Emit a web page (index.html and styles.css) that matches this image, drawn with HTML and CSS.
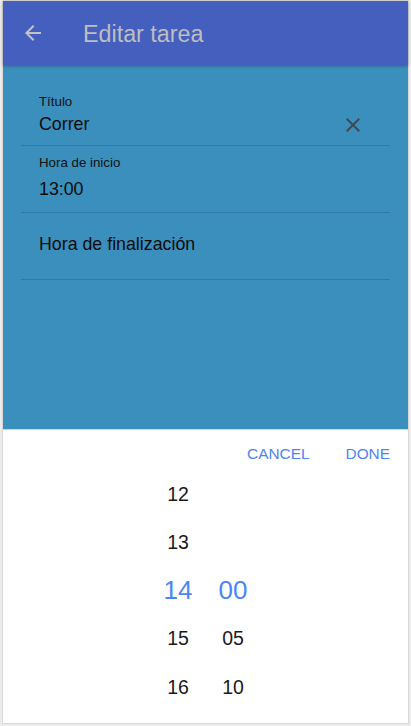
FILE: index.html
```html
<!DOCTYPE html>
<html lang="es">
<head>
<meta charset="utf-8">
<title>Editar tarea</title>
<link rel="stylesheet" href="styles.css">
</head>
<body>
<div class="app">
  <header class="toolbar">
    <svg class="back" viewBox="0 0 24 24" width="24" height="24"><path d="M20 11H7.83l5.59-5.59L12 4l-8 8 8 8 1.41-1.41L7.83 13H20v-2z"/></svg>
    <h1 class="title">Editar tarea</h1>
  </header>
  <main class="form">
    <div class="field field-title">
      <div class="field-body">
        <div class="label">Título</div>
        <div class="value">Correr</div>
      </div>
      <svg class="clear" viewBox="0 0 24 24" width="24" height="24"><path d="M19 6.41L17.59 5 12 10.59 6.41 5 5 6.41 10.59 12 5 17.59 6.41 19 12 13.41 17.59 19 19 17.59 13.41 12z"/></svg>
    </div>
    <div class="field field-start">
      <div class="field-body">
        <div class="label">Hora de inicio</div>
        <div class="value">13:00</div>
      </div>
    </div>
    <div class="field field-end">
      <div class="field-body">
        <div class="value">Hora de finalización</div>
      </div>
    </div>
  </main>
  <section class="picker">
    <div class="picker-actions">
      <span class="btn">CANCEL</span>
      <span class="btn">DONE</span>
    </div>
    <div class="wheels">
      <div class="wheel">
        <div class="item">12</div>
        <div class="item">13</div>
        <div class="item selected">14</div>
        <div class="item">15</div>
        <div class="item">16</div>
      </div>
      <div class="wheel">
        <div class="item"></div>
        <div class="item"></div>
        <div class="item selected">00</div>
        <div class="item">05</div>
        <div class="item">10</div>
      </div>
    </div>
  </section>
</div>
</body>
</html>
```
FILE: styles.css
```css
* { box-sizing: border-box; }
html, body { margin: 0; }
body {
  background: #ebebeb;
  padding: 1px 3px 3px 3px;
  font-family: "Liberation Sans", Arial, sans-serif;
  width: 411px;
  height: 726px;
  overflow: hidden;
}
.app {
  width: 405px;
  height: 722px;
  display: flex;
  flex-direction: column;
  background: #fff;
  box-shadow: 0 0 0 1px #d9d9d9;
}
.toolbar {
  position: relative;
  z-index: 1;
  height: 64px;
  flex: none;
  display: flex;
  align-items: center;
  padding: 2px 0 0 18px;
  background: #445fbd;
  box-shadow: 0 1px 3px rgba(0,0,0,0.3);
}
.back {
  fill: #c3c3c6;
  flex: none;
  margin-bottom: 2px;
}
.title {
  margin: 0 0 0 38px;
  font-size: 23.3px;
  font-weight: normal;
  line-height: 28px;
  color: #bdbdc2;
}
.form {
  height: 364px;
  flex: none;
  background: #3b8fbc;
  padding: 0 18px;
}
.field {
  display: flex;
  border-bottom: 1px solid #2f7aa4;
}
.field-body {
  flex: 1;
  padding-left: 18px;
}
.label {
  font-size: 13.3px;
  line-height: 16px;
  color: #111;
}
.value {
  font-size: 17.8px;
  line-height: 20px;
  color: #0c0c0c;
}
.field-title { padding: 28.5px 0 11px; }
.field-title .value { margin-top: 4.4px; }
.field-start { padding: 9.5px 0 13px; }
.field-start .value { margin-top: 7.4px; }
.field-end { padding: 21px 0 25px; }
.clear {
  flex: none;
  align-self: flex-end;
  margin: 0 25px -3px 0;
  fill: #404a52;
}
.picker {
  flex: 1;
  border-top: 1px solid #c9d7e2;
  display: flex;
  flex-direction: column;
}
.picker-actions {
  height: 39.5px;
  flex: none;
  display: flex;
  justify-content: flex-end;
  gap: 36px;
  padding: 15.2px 18px 0 0;
}
.btn {
  font-size: 15.4px;
  line-height: 18px;
  color: #4d84f4;
}
.wheels {
  display: flex;
  justify-content: center;
}
.wheel {
  width: 55px;
  display: flex;
  flex-direction: column;
}
.item {
  height: 48.3px;
  line-height: 48.3px;
  text-align: center;
  font-size: 19.5px;
  color: #1a1a1a;
}
.item.selected {
  font-size: 26px;
  color: #4a86f5;
}
```
